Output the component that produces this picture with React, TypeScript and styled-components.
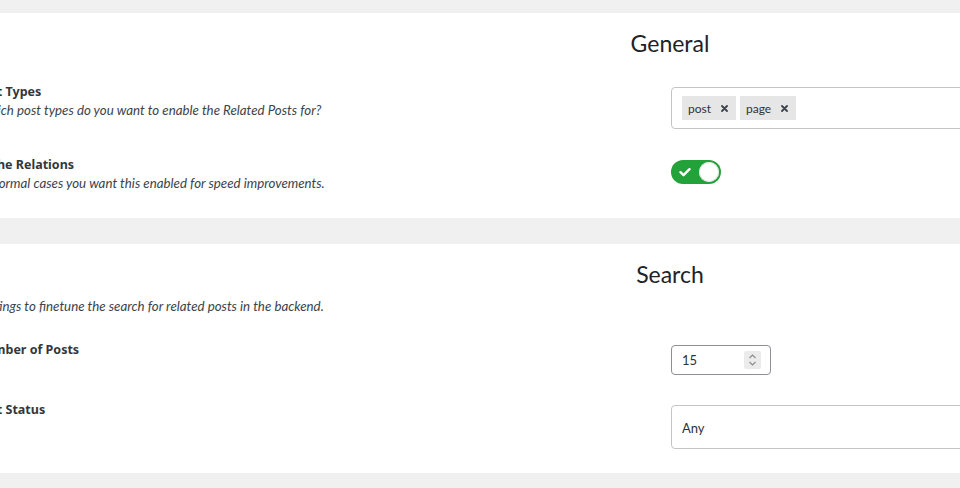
import React from "react";
import styled, { createGlobalStyle } from "styled-components";

const GlobalStyle = createGlobalStyle`
  html, body {
    margin: 0;
    padding: 0;
    background: #f0f0f1;
    overflow: hidden;
  }
  body {
    font-family: Lato, "Noto Sans", sans-serif;
    color: #32373c;
  }
`;

// the settings page is wider than the window; it is shown cut at the left
const Page = styled.div`
  display: flex;
  flex-direction: column;
  gap: 26px;
  width: 1384px;
  margin-left: -22px;
  padding-top: 13px;
`;

type CardProps = { bottom: number };

const Card = styled.section<CardProps>`
  background: #fff;
  padding: 14px 0 ${(p) => p.bottom}px;
`;

const CardTitle = styled.h2`
  margin: 0;
  font-family: Lato, sans-serif;
  font-size: 23px;
  line-height: 32px;
  font-weight: 400;
  color: #1d2327;
  text-align: center;
`;

type RowsProps = { top: number; gap: number };

const Rows = styled.div<RowsProps>`
  display: flex;
  flex-direction: column;
  gap: ${(p) => p.gap}px;
  margin-top: ${(p) => p.top}px;
`;

const Row = styled.div`
  display: grid;
  grid-template-columns: 693px 1fr;
  align-items: start;
`;

const LabelCol = styled.div`
  display: flex;
  flex-direction: column;
`;

const Label = styled.div`
  margin-left: -3px;
  font-family: "Noto Sans", sans-serif;
  font-size: 12.5px;
  line-height: 18px;
  font-weight: 700;
  color: #32373c;
`;

const Desc = styled.div`
  font-size: 13.3px;
  line-height: 18px;
  font-style: italic;
  color: #3c434a;
`;

const SectionDesc = styled(Desc)`
  margin-top: 7px;
`;

const Control = styled.div`
  margin-top: 4px;
`;

const TagBox = styled.div`
  display: flex;
  align-items: center;
  gap: 4px;
  height: 42px;
  box-sizing: border-box;
  padding: 0 10px;
  border: 1px solid #c3c4c7;
  border-radius: 4px;
`;

const Tag = styled.span`
  display: inline-flex;
  align-items: center;
  gap: 10px;
  height: 24px;
  padding: 0 8px 0 6px;
  background: #e6e6e6;
  font-size: 12px;
  color: #2c3338;
`;

const Toggle = styled.div`
  display: flex;
  align-items: center;
  justify-content: space-between;
  width: 50px;
  height: 24px;
  box-sizing: border-box;
  padding: 0 2px 0 8px;
  border-radius: 12px;
  background: #23a23a;
`;

const Knob = styled.span`
  width: 20px;
  height: 20px;
  border-radius: 50%;
  background: #fff;
  box-shadow: inset 0 0 0 1px #e2e2e2;
`;

const NumberBox = styled.div`
  display: flex;
  align-items: center;
  justify-content: space-between;
  width: 100px;
  height: 30px;
  box-sizing: border-box;
  padding: 0 9px 0 10px;
  border: 1px solid #8c8f94;
  border-radius: 4px;
  font-size: 13px;
  color: #2c3338;
`;

const Spinner = styled.span`
  display: flex;
  align-items: center;
  justify-content: center;
  width: 17px;
  height: 18px;
  background: #ebebeb;
  border-radius: 2px;
`;

const SelectBox = styled.div`
  display: flex;
  align-items: center;
  height: 44px;
  box-sizing: border-box;
  padding: 2px 10px 0;
  border: 1px solid #c3c4c7;
  border-radius: 4px;
  font-size: 13px;
  color: #2c3338;
`;

function Close() {
  return (
    <svg width="7" height="7" viewBox="0 0 7 7">
      <path d="M1 1l5 5M6 1L1 6" stroke="#3c434a" strokeWidth="1.8" strokeLinecap="round" />
    </svg>
  );
}

function Check() {
  return (
    <svg width="12" height="10" viewBox="0 0 12 10">
      <path d="M1.5 5.2l3 3 6-6" fill="none" stroke="#fff" strokeWidth="2.4" strokeLinecap="round" strokeLinejoin="round" />
    </svg>
  );
}

function Chevrons() {
  return (
    <svg width="9" height="14" viewBox="0 0 9 14">
      <path d="M1.5 5L4.5 2l3 3M1.5 9l3 3 3-3" fill="none" stroke="#8a8a8a" strokeWidth="1.1" />
    </svg>
  );
}

export default function App() {
  const tags = ["post", "page"];

  return (
    <>
      <GlobalStyle />
      <Page>
        <Card bottom={26}>
          <CardTitle>General</CardTitle>
          <Rows top={24} gap={27}>
            <Row>
              <LabelCol>
                <Label>Post Types</Label>
                <Desc>Which post types do you want to enable the Related Posts for?</Desc>
              </LabelCol>
              <Control>
                <TagBox>
                  {tags.map((t) => (
                    <Tag key={t}>
                      {t}
                      <Close />
                    </Tag>
                  ))}
                </TagBox>
              </Control>
            </Row>
            <Row>
              <LabelCol>
                <Label>Cache Relations</Label>
                <Desc>In normal cases you want this enabled for speed improvements.</Desc>
              </LabelCol>
              <Control>
                <Toggle>
                  <Check />
                  <Knob />
                </Toggle>
              </Control>
            </Row>
          </Rows>
        </Card>

        <Card bottom={24}>
          <CardTitle>Search</CardTitle>
          <SectionDesc>Settings to finetune the search for related posts in the backend.</SectionDesc>
          <Rows top={26} gap={26}>
            <Row>
              <LabelCol>
                <Label>Number of Posts</Label>
              </LabelCol>
              <Control>
                <NumberBox>
                  15
                  <Spinner>
                    <Chevrons />
                  </Spinner>
                </NumberBox>
              </Control>
            </Row>
            <Row>
              <LabelCol>
                <Label>Post Status</Label>
              </LabelCol>
              <Control>
                <SelectBox>Any</SelectBox>
              </Control>
            </Row>
          </Rows>
        </Card>
      </Page>
    </>
  );
}
